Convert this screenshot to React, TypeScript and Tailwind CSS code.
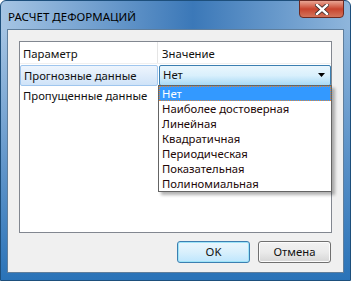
import React from "react";

const font = { fontFamily: '"Noto Sans", "Open Sans", sans-serif' };

const items = [
  "Нет",
  "Наиболее достоверная",
  "Линейная",
  "Квадратичная",
  "Периодическая",
  "Показательная",
  "Полиномиальная",
];

export default function App() {
  return (
    <div
      className="relative w-[351px] h-[281px] overflow-hidden text-[11.3px] text-[#111]"
      style={font}
    >
      {/* Aero frame */}
      <div className="flex flex-col w-full h-full border border-[#1d4f7c] rounded-t-[6px] bg-[linear-gradient(to_bottom,rgba(40,110,180,0)_10%,rgba(40,110,180,0.55)_60%,#2a73b8_100%),linear-gradient(to_right,#a6c5e4,#3b78b8_55%,#8fb6dc)]">
        {/* Title bar */}
        <div className="flex items-start h-[28px] shrink-0 pl-[7px]">
          <span className="mt-[7px] text-[11.5px] text-black">РАСЧЕТ ДЕФОРМАЦИЙ</span>
          <div className="ml-auto mr-[6px] w-[45px] h-[18px] -mt-px flex items-center justify-center rounded-b-[4px] border border-[#6d2a22] bg-gradient-to-b from-[#e8a493] via-[#c8432d] to-[#d2735b]">
            <svg width="14" height="11" viewBox="0 0 14 11">
              <path d="M2 1 L12 10 M12 1 L2 10" stroke="#3a2a2a" strokeWidth="4" strokeLinecap="square" />
              <path d="M2 1 L12 10 M12 1 L2 10" stroke="#fff" strokeWidth="2.4" strokeLinecap="square" />
            </svg>
          </div>
        </div>

        {/* Client area */}
        <div className="flex-1 mx-[6px] mb-[7px] border border-[#5f7e9c] bg-[#f0f0f0] flex flex-col px-[11px] pt-[11px] pb-[8px]">
          {/* Grid */}
          <div className="relative h-[192px] border border-[#828790] bg-white">
            <div className="flex h-[22px] border-b border-[#f0f0f0]">
              <div className="w-[138px] pl-[3px] pt-[4px] border-r border-[#e5e5e5]">Параметр</div>
              <div className="flex-1 pl-[4px] pt-[4px]">Значение</div>
            </div>
            <div className="flex h-[21px] mt-px">
              <div className="w-[138px] pl-[3px] pt-[2px] border border-[#9fc6ee] rounded-[2px] bg-gradient-to-b from-[#eef5fd] to-[#cfe3f8]">
                Прогнозные данные
              </div>
              <div className="flex-1 ml-px flex items-center pl-[3px] border border-[#3c7fb1] rounded-[2px] bg-gradient-to-b from-[#eaf6fd] via-[#d9f0fc] to-[#a7d9f5]">
                <span>Нет</span>
                <svg className="ml-auto mr-[4px]" width="8" height="5" viewBox="0 0 8 5">
                  <path d="M0 0 H7 L3.5 4 Z" fill="#000" />
                </svg>
              </div>
            </div>
            <div className="flex h-[20px]">
              <div className="w-[138px] pl-[3px] pt-[2px]">Пропущенные данные</div>
            </div>

            {/* Dropdown list */}
            <div className="absolute left-[138px] top-[43px] w-[174px] border border-[#646464] bg-white shadow-[3px_3px_3px_rgba(0,0,0,0.3)]">
              {items.map((t, i) => (
                <div
                  key={t}
                  className={
                    i === 0
                      ? "h-[15px] leading-[13px] pl-[2px] bg-[#3399ff] text-white border border-dotted border-[#e0883a]"
                      : "h-[15px] leading-[15px] pl-[3px] text-[#220808]"
                  }
                >
                  {t}
                </div>
              ))}
            </div>
          </div>

          {/* Buttons */}
          <div className="flex justify-end gap-[8px] mt-[8px] mr-[1px]">
            <button className="w-[73px] h-[22px] rounded-[3px] border border-[#3c7fb1] bg-gradient-to-b from-[#eaf6fd] via-[#d9f0fc] to-[#bee6fd] shadow-[inset_0_0_0_1px_#9ee4f8]">
              OK
            </button>
            <button className="w-[73px] h-[22px] rounded-[3px] border border-[#707070] bg-gradient-to-b from-[#f2f2f2] via-[#ebebeb] to-[#d6d6d6] shadow-[inset_0_0_0_1px_#fcfcfc]">
              Отмена
            </button>
          </div>
        </div>
      </div>
    </div>
  );
}
